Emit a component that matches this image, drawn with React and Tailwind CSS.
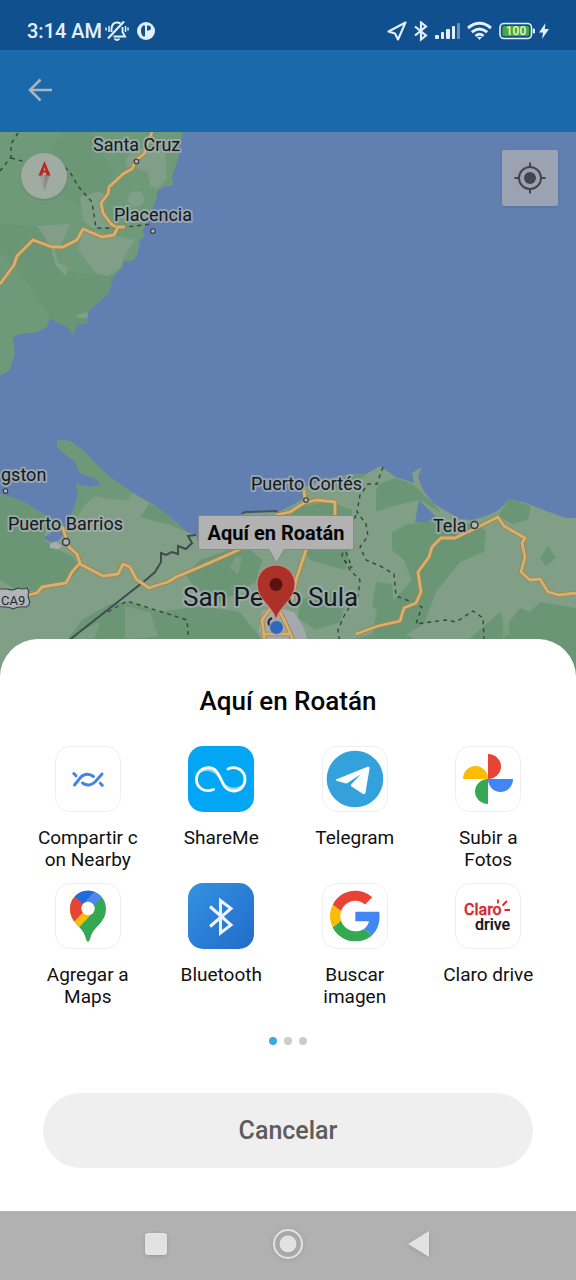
const dark = "#6a9676";
const mid = "#6f9a79";
const light = "#809f86";

function MapArt() {
  return (
    <svg
      className="absolute inset-0 h-full w-full"
      viewBox="0 132 576 563"
      preserveAspectRatio="xMidYMin slice"
      fontFamily="Roboto, sans-serif"
      role="img"
      aria-label="Mapa"
    >
      <rect x="0" y="132" width="576" height="563" fill="#617fb1" />

      {/* northern coast */}
      <path
        fill={mid}
        d="M0 132H183L180 143L178 160L174 171L172 177L173 186L166 186L158 190L156 200L150 214L143 230L144 237L140 240L137 255L133 261L124 261L122 268L114 276L109 292L100 301L88 312L87 323L77 325L74 335L67 327L58 323L50 318L47 327L37 332L20 334L13 338L15 353L10 370L0 376Z"
      />
      <path fill={dark} d="M0 223L35 226L50 236L58 268L80 274L114 276L109 292L100 301L88 312L87 323L77 325L74 334L67 327L58 322L50 318L20 272L0 252Z" />
      <path fill={dark} d="M98 146L112 170L112 190L96 193L80 207L62 195L50 160L60 132H92Z" opacity=".6" />
      <g fill={light}>
        <path d="M83 228L115 236L135 240L128 250L124 258L120 268L108 276L96 273L87 262L78 250Z" />
        <path d="M37 226L70 224L62 243L54 248L58 262L68 268L66 276L56 266L50 246Z" />
        <path d="M80 197L100 191L107 198L102 208L112 227L94 229L84 222Z" />
        <path d="M126 160L134 148L165 150L167 178L158 189L150 186L148 172L135 168L126 166Z" />
        <circle cx="136" cy="199" r="8" />
        <path d="M76 315L88 312L87 318L78 318Z" />
      </g>

      {/* southern coast */}
      <path
        fill={light}
        d="M0 494L20 500L37 510L55 521L62 531L52 532L43 538L50 542L58 541L64 534L68 522L74 508L78 495L76 484L90 487L100 485L98 480L80 473L75 462L63 452L57 447L57 440L70 441L85 452L97 465L110 477L133 493L157 507L177 523L187 532L196 535L200 548L215 546L234 535L242 514L280 511L293 505L304 498L301 488L327 479L347 475L366 474L380 466L396 477L414 483L412 473L422 467L418 477L423 490L433 503L446 511L460 519L472 520L486 516L499 510L509 499L526 503L549 512L566 518L576 518V695H0Z"
      />
      <path fill="#617fb1" d="M419 500L415 522L424 523L437 518L427 508Z" />
      <g fill={dark}>
        <path d="M0 494L20 500L37 510L55 521L46 530L44 540L58 550L72 556L80 568L66 584L40 590L20 592L0 580Z" />
        <path d="M57 440L70 441L85 452L97 465L110 477L133 493L127 500L110 499L95 496L84 506L76 520L70 522L78 495L76 484L90 487L100 485L98 480L80 473L75 462L63 452L57 447Z" opacity=".8" />
        <path d="M149 504L157 507L177 523L187 532L170 525L140 517Z" />
        <path d="M82 620L110 604L130 602L160 612L200 606L240 612L262 640L270 695H30L60 650Z" />
        <path d="M200 560L245 545L262 560L256 582L220 602L196 590L186 575Z" />
        <path d="M290 508L330 502L352 510L350 548L345 570L310 560L296 536Z" />
        <path d="M300 600L330 590L346 600L340 622L316 630L298 618Z" />
        <path d="M327 479L366 474L350 488L338 490Z" />
        <path d="M379 484L396 478L414 485L424 495L433 503L440 512L420 500L392 506L376 512L376 490Z" />
        <path d="M408 524L440 520L470 524L486 530L484 552L460 562L436 592L424 624L404 636L372 640L376 612L394 600L412 580L404 560L392 550L392 532Z" />
        <path d="M509 499L531 506L528 520L512 524L498 516Z" />
        <path d="M540 558L548 546L556 558L546 566Z" />
        <path d="M376 582L392 584L394 606L380 612L372 606Z" />
        <path d="M468 640L484 626L500 612L506 626L520 608L530 612L540 602L576 608V695H440Z" />
        <path d="M352 640L380 632L410 636L420 650H350Z" />
      </g>
      <g fill={light} opacity=".8">
        <path d="M125 606L150 612L158 636L125 640Z" />
        <path d="M80 632L100 622L94 640H76Z" />
        <path d="M236 556L242 558L238 574L230 568Z" />
        <path d="M503 622L508 614L510 634L503 638Z" />
      </g>
      <path fill="#a8acb0" d="M50 544L56 542L62 546L58 549L50 548Z" />
      <path fill="#a3a9ac" d="M262 612L272 606L294 612L304 628L310 650H266L259 630Z" />

      {/* boundaries */}
      <g fill="none" stroke="#32493c" strokeWidth="1.4" strokeDasharray="4 4">
        <path d="M18 133L11 144L11 157L0 171" />
        <path d="M11 158L26 162L60 163L70 172L78 186L92 202L96 228L118 228L152 224" />
        <path d="M108 612L127 601L187 620L189 645" />
        <path d="M383 467L377 484L368 484L360 495L357 512L366 524L368 536L360 547L366 560L380 566L394 574L396 596L412 602L422 607L416 624L446 620L456 622L473 611L483 618L484 640" />
        <path d="M356 515L346 540L342 556L350 570L360 580L358 596L350 606L344 616L338 630L340 645" />
        <path d="M346 552L352 568L344 560" />
      </g>
      <path
        d="M68 641L147 579L155 572L161 562V553L166 555L172 552L178 554V546L186 549L192 543L188 536L196 535"
        fill="none"
        stroke="#3f4b50"
        strokeWidth="2"
      />
      <path d="M242 514Q244 511 250 512L276 511L281 515" fill="none" stroke="#475460" strokeWidth="2" />

      {/* roads */}
      <g fill="none" strokeLinejoin="round">
        {["#a8823f", "#d3b174"].map((c, i) => (
          <g key={c} stroke={c} strokeWidth={i ? 2.8 : 4.4}>
            <path d="M152 132L144 154L136 160L132 169L123 174L109 187L108 194L101 203L103 213L111 224L116 227" />
            <path d="M0 284L14 265L17 256L33 240L52 247L63 247L77 240L83 229L102 237L114 235L118 227L125 227" />
            <path d="M28 595L37 593L42 587L66 583L72 572L80 563L77 554L69 547L62 526" />
            <path d="M80 564L103 576L118 574L123 564L130 567L136 579L149 588L161 584L168 582L176 577L200 567L225 556L245 547" />
            <path d="M276 515L290 512L304 503L316 500L335 502V516L306 550L296 580L292 600" />
            <path d="M356 634L378 626L400 621L404 608L416 603L421 592L418 572L429 557L432 547L441 538L455 538L472 530L484 524L498 517L504 526L525 538L522 543L525 557L521 572L530 580L540 579L548 592L559 595L576 593" />
            <path d="M304 490L305 499" />
            <path d="M272 606L262 620L265 645M280 612L286 624L294 642M264 634H290" />
          </g>
        ))}
      </g>

      {/* towns */}
      <g fill="#aeb5b8" stroke="#343a3d" strokeWidth="1.5">
        <circle cx="136.500" cy="161.500" r="2.300" strokeWidth="1.100" />
        <circle cx="153" cy="231" r="2.300" strokeWidth="1.100" />
        <circle cx="5.500" cy="491" r="2.300" strokeWidth="1.100" />
        <circle cx="306" cy="500" r="2.300" strokeWidth="1.100" />
        <circle cx="66" cy="542" r="3.500" />
        <circle cx="474.500" cy="525" r="3.500" />
      </g>
      <g fill="#b2b5b8" stroke="#3c4548" strokeWidth="1.200">
        <path d="M-4 589H7Q13 591 18 588Q23 590 27 588L29 592Q27 596 29.500 601Q30 606 26 607Q18 606 13 609Q8 606 -4 607Z" />
      </g>
      <text x="1" y="605" fontSize="13" fill="#22282a">CA9</text>

      <g
        fill="#15191b"
        stroke="#a5afb4"
        strokeOpacity=".75"
        strokeWidth="4"
        strokeLinejoin="round"
        style={{ paintOrder: "stroke" }}
        fontSize="18"
      >
        <text x="93" y="151">Santa Cruz</text>
        <text x="114" y="221">Placencia</text>
        <text x="1" y="481">gston</text>
        <text x="8" y="530">Puerto Barrios</text>
        <text x="251" y="490">Puerto Cortés</text>
        <text x="433" y="532">Tela</text>
        <text x="183" y="606" fontSize="26">San Pedro Sula</text>
      </g>

      {/* marker and its callout */}
      <path d="M272 618Q266 621 270 626" fill="none" stroke="#1d2122" strokeWidth="2" />
      <path
        d="M276 620C273 606 257 600 257 584A19 19 0 0 1 295 584C295 600 279 606 276 620Z"
        fill="#ab3129"
        stroke="#c99489"
        strokeWidth="1"
      />
      <circle cx="276" cy="584.500" r="6.500" fill="#5c110f" />
      <circle cx="276.500" cy="627.500" r="7" fill="#2f68bd" stroke="#a5adb6" strokeWidth="1" />
      <path d="M198.500 515.500H353.500V549.500H284L276.500 563L269 549.500H198.500Z" fill="#b2b2b2" stroke="#858b8b" strokeWidth="1" />
      <text x="276" y="540" fontSize="20" fontWeight="700" textAnchor="middle" fill="#050505">
        Aquí en Roatán
      </text>
    </svg>
  );
}

function StatusBar() {
  return (
    <div className="flex h-[50px] items-center bg-[#11508f] px-[27px] pt-3 text-[#e3f0fb]">
      <span className="text-[20px] leading-6 font-medium">3:14 AM</span>
      <svg className="ml-[3px] h-[22px] w-6" viewBox="0 0 24 22" fill="none" stroke="currentColor" strokeWidth="1.900">
        <path d="M6.500 12V9Q7 2.500 12 2.500Q14 2.500 15.500 3.500M17.500 7V12L20 16.500H8.500" />
        <path d="M3 18.500L19 1.500" strokeWidth="2.200" />
        <path d="M9.500 18.500Q12 21.500 14.500 18.500" />
        <path d="M4 6V12M1 7.500V10.500M20.500 6V12M23 7.500V10.500" strokeWidth="1.500" />
      </svg>
      <svg className="ml-2 h-[18px] w-[18px]" viewBox="0 0 18 18">
        <circle cx="9" cy="9" r="9" fill="currentColor" />
        <path d="M8 3.500H6Q4 5 4 9T6 14.500H8Z" fill="#11508f" />
        <path d="M10 3.500H11.500Q14 3.800 14 6Q14 8.300 11.500 8.500H10Z" fill="#11508f" />
      </svg>
      <div className="ml-auto flex items-center gap-[7px]">
        <svg className="h-5 w-5" viewBox="0 0 20 20" fill="none" stroke="currentColor" strokeWidth="2.100" strokeLinejoin="round">
          <path d="M18.500 1.500L1.500 10.500L8 12.500L11 18.500Z" />
        </svg>
        <svg className="h-[21px] w-3.5" viewBox="0 0 14 21" fill="none" stroke="currentColor" strokeWidth="2.200">
          <path d="M1 5.500L12 14.500L7 18.500V1.500L12 5.500L1 14.500" />
        </svg>
        <svg className="h-5 w-[25px]" viewBox="0 0 25 20" fill="currentColor">
          <rect x="0" y="14" width="4" height="4" rx="1" />
          <rect x="6" y="11" width="3" height="7" rx="1" />
          <rect x="11" y="8" width="4" height="10" rx="1" />
          <rect x="17" y="5" width="3" height="13" rx="1" />
          <rect x="22" y="2" width="3" height="16" rx="1" opacity=".4" />
        </svg>
        <svg className="h-5 w-[25px]" viewBox="0 0 25 20" fill="none" stroke="currentColor" strokeWidth="2.900">
          <path d="M1 7Q12.500 -2.300 24 7" />
          <path d="M4.800 11.200Q12.500 4.600 20.200 11.200" />
          <path d="M8.500 15Q12.500 11.500 16.500 15" />
          <path d="M10 16H15L12.500 19Z" fill="currentColor" stroke="none" />
        </svg>
        <div className="flex items-center gap-1">
          <svg className="h-[18px] w-9" viewBox="0 0 36 18">
            <rect x="1" y="1.500" width="31.500" height="15" rx="4" fill="none" stroke="currentColor" strokeWidth="1.600" />
            <rect x="3.500" y="4" width="26.500" height="10" rx="1.500" fill="#4aa82d" />
            <rect x="33.800" y="6.500" width="2.200" height="5" rx="1" fill="currentColor" />
            <text x="17" y="13" fontSize="12" fontWeight="500" textAnchor="middle" fill="#e9f6e4" fontFamily="Roboto, sans-serif">100</text>
          </svg>
          <svg className="h-4 w-2.5" viewBox="0 0 10 16" fill="currentColor">
            <path d="M6.500 0L0 9.500H4L3 16L10 6H5.800Z" />
          </svg>
        </div>
      </div>
    </div>
  );
}

const tileBase = "flex h-[66px] w-[66px] items-center justify-center overflow-hidden rounded-[15px]";

const apps = [
  {
    lines: ["Compartir c", "on Nearby"],
    tile: "border border-[#efefef] bg-white",
    art: (
      <g fill="none" stroke="#4782e6" strokeWidth="3" strokeLinecap="round">
        <path d="M19.500 39L25.500 31.500Q28.500 28.300 32 28.300Q36 28.300 38.500 30.500" />
        <path d="M27.500 37Q30.500 39.300 34 39Q37.500 38.600 40.500 35.500L47 28" />
        <path d="M18.800 27.500L21 29.800M45.200 37.200L47.300 39.300" />
      </g>
    ),
  },
  {
    lines: ["ShareMe"],
    tile: "bg-[#03a5f5]",
    art: (
      <>
        <path d="M9 30Q12 20.500 21 21.500Q28 22 33 36Q28 25.500 20 25Q13 24.500 9 30ZM57 36Q54 46 45 45Q37 44 33 33Q38 41.500 46 41.500Q53 41 57 36Z" fill="#8dd6fb" />
        <path
          d="M25.500 43.500C16 47 8.500 41.500 8.500 33.500C8.500 26.500 14 21.700 20.500 21.700C35 21.700 31 45 45.500 45C52 45 57 40 57 33.300C57 25 49 19 40 23"
          fill="none"
          stroke="#fff"
          strokeWidth="2.800"
          strokeLinecap="round"
        />
      </>
    ),
  },
  {
    lines: ["Telegram"],
    tile: "border border-[#efefef] bg-white",
    art: (
      <>
        <circle cx="33" cy="33" r="28.300" fill="#33a1dc" />
        <path d="M14.500 33.200L45.500 20.800Q48 20.200 47.600 22.600L43.500 46.500Q43 49 40.700 47.700L29.500 40.500Q28.200 39.500 29.300 38.300L38.700 28.200L25.500 37Q24.300 37.700 23 37.300L14.500 34.700Q12.800 34 14.500 33.200Z" fill="#fff" />
      </>
    ),
  },
  {
    lines: ["Subir a", "Fotos"],
    tile: "border border-[#efefef] bg-white",
    art: (
      <>
        <path d="M33 33V8A13 12.500 0 0 1 33 33Z" fill="#e94335" />
        <path d="M33 33H8A12.500 13 0 0 1 33 33Z" fill="#fbbc05" />
        <path d="M33 33H58A12.500 13 0 0 1 33 33Z" fill="#4285f4" />
        <path d="M33 33V58A13 12.500 0 0 1 33 33Z" fill="#34a853" />
      </>
    ),
  },
  {
    lines: ["Agregar a", "Maps"],
    tile: "border border-[#efefef] bg-white",
    art: (
      <>
        <clipPath id="pin">
          <path d="M33 58.700C31 58.700 31 54 28.500 49.500C24.500 42.500 15 38 15 25.700A18 18 0 0 1 51 25.700C51 38 41.500 42.500 37.500 49.500C35 54 35 58.700 33 58.700Z" />
        </clipPath>
        <g clipPath="url(#pin)">
          <rect width="66" height="66" fill="#34a853" />
          <path d="M33 25.500L38.500 29L22.500 46L0 60V20Z" fill="#fbbc04" />
          <path d="M14 8L33 25.500L28 29.500L16.500 41H0Z" fill="#e94335" />
          <path d="M19.500 13.500L14 0H60L47 13.500L38 24L33 25.700Z" fill="#4c88f0" />
          <path d="M19.500 13.500L14 0H48L39.500 8.500L28 21Z" fill="#1f6be0" />
        </g>
        <circle cx="33" cy="25.500" r="6.700" fill="#fff" />
      </>
    ),
  },
  {
    lines: ["Bluetooth"],
    tile: "bg-linear-to-br from-[#3492e2] to-[#226bc8]",
    art: (
      <path d="M22 23.500L43 42L32.500 50V17.500L43 25.500L22 43.500" fill="none" stroke="#eef5ff" strokeWidth="3" />
    ),
  },
  {
    lines: ["Buscar", "imagen"],
    tile: "border border-[#efefef] bg-white",
    art: (
      <g transform="translate(8 7.700) scale(1.055)">
        <path fill="#4285f4" d="M46.980 24.550c0-1.570-.15-3.090-.38-4.550H24v9.020h12.940c-.58 2.960-2.260 5.480-4.780 7.180l7.730 6c4.510-4.180 7.090-10.360 7.090-17.650z" />
        <path fill="#e94335" d="M24 9.500c3.540 0 6.710 1.220 9.210 3.600l6.850-6.850C35.900 2.380 30.470 0 24 0 14.620 0 6.510 5.380 2.560 13.220l7.980 6.190C12.430 13.720 17.740 9.500 24 9.500z" />
        <path fill="#fbbc05" d="M10.530 28.590c-.48-1.450-.76-2.990-.76-4.590s.27-3.140.76-4.590l-7.980-6.190C.92 16.460 0 20.120 0 24c0 3.880.92 7.540 2.560 10.780l7.970-6.190z" />
        <path fill="#34a853" d="M24 48c6.480 0 11.930-2.130 15.890-5.810l-7.730-6c-2.150 1.450-4.920 2.300-8.160 2.300-6.260 0-11.570-4.220-13.470-9.910l-7.980 6.190C6.510 42.620 14.620 48 24 48z" />
      </g>
    ),
  },
  {
    lines: ["Claro drive"],
    tile: "border border-[#efefef] bg-white",
    art: (
      <>
        <g fontFamily="Roboto, sans-serif" fontSize="16" fontWeight="500">
          <text x="9" y="32" fill="#d9262c" stroke="#d9262c" strokeWidth=".3">Claro</text>
          <text x="20" y="47" fill="#161616" stroke="#161616" strokeWidth=".2">drive</text>
        </g>
        <path d="M43 16.500V20.500M47.500 22.500L52 18M49.500 27H55" stroke="#d9262c" strokeWidth="1.800" />
      </>
    ),
  },
];

function AppTile({ app }) {
  return (
    <button type="button" className="flex flex-col items-center gap-[15px]">
      <span className={`${tileBase} ${app.tile}`}>
        <svg className="h-[66px] w-[66px] shrink-0" viewBox="0 0 66 66" aria-hidden="true">
          {app.art}
        </svg>
      </span>
      <span className="min-h-[44px] text-[19px] leading-[22px] text-[#111]">
        {app.lines.map((line) => (
          <span key={line} className="block whitespace-nowrap">{line}</span>
        ))}
      </span>
    </button>
  );
}

function ShareSheet() {
  return (
    <section className="relative -mt-14 flex flex-col rounded-t-[38px] bg-white px-[21px] pt-[46px] pb-[43px]">
      <h1 className="text-center text-[26px] leading-8 font-medium text-[#050505]">Aquí en Roatán</h1>
      <div className="mt-[29px] grid grid-cols-4 gap-y-3">
        {apps.map((app) => (
          <AppTile key={app.lines[0]} app={app} />
        ))}
      </div>
      <div className="mt-[29px] flex justify-center gap-[7px]">
        <span className="h-2 w-2 rounded-full bg-[#3ba9e4]" />
        <span className="h-2 w-2 rounded-full bg-[#cccccc]" />
        <span className="h-2 w-2 rounded-full bg-[#cccccc]" />
      </div>
      <button type="button" className="mx-[22px] mt-12 h-[75px] rounded-full bg-[#efefef] text-[25px] font-medium text-[#5d5d5d]">
        Cancelar
      </button>
    </section>
  );
}

export default function App() {
  return (
    <div className="flex min-h-screen flex-col bg-[#b1b1b1] font-[Roboto,sans-serif]">
      <StatusBar />
      <header className="flex h-[82px] items-center bg-[#1a69aa] px-7 pb-0.5">
        <button type="button" aria-label="Atrás" className="text-[#adb4ba]">
          <svg className="h-6 w-6" viewBox="0 0 24 24" fill="none" stroke="currentColor" strokeWidth="2.500">
            <path d="M24 12H2M12.500 1.500L2 12L12.500 22.500" />
          </svg>
        </button>
      </header>
      <main className="relative min-h-[400px] flex-1 overflow-hidden">
        <MapArt />
        <button type="button" aria-label="Brújula" className="absolute top-[21px] left-[21px] h-[46px] w-[46px] rounded-full bg-[#a0aba1] shadow">
          <svg className="h-full w-full" viewBox="0 0 46 46">
            <path d="M18.500 22H28.500L23.300 38Z" fill="#9a9d9c" />
            <path d="M23.300 22H28.500L23.300 38Z" fill="#87898a" />
            <path d="M23.500 8L29.500 22.500H25.500L25 19.500H22L21.300 22.500H17.500Z" fill="#bd2522" />
            <path d="M23.500 14L24.500 17.500H22.500Z" fill="#c99a90" />
          </svg>
        </button>
        <button type="button" aria-label="Mi ubicación" className="absolute top-[18px] right-[18px] h-14 w-14 rounded-[2px] bg-[#9ba3b2] shadow">
          <svg className="h-full w-full" viewBox="0 0 56 56" fill="none" stroke="#41464c" strokeWidth="2">
            <circle cx="28" cy="28" r="11" />
            <circle cx="28" cy="28" r="6" fill="#41464c" stroke="none" />
            <path d="M28 12.500V17M28 39V43.500M12.500 28H17M39 28H43.500" />
          </svg>
        </button>
      </main>
      <ShareSheet />
      <nav className="grid h-[69px] grid-cols-3 items-center bg-[#b1b1b1] px-[90px] pb-1 text-[#e2e2e2]">
        <button type="button" aria-label="Recientes" className="flex justify-center">
          <svg className="h-8 w-8 drop-shadow-sm" viewBox="0 0 32 32" fill="currentColor">
            <rect x="5" y="5" width="22" height="22" rx="3" />
          </svg>
        </button>
        <button type="button" aria-label="Inicio" className="flex justify-center">
          <svg className="h-8 w-8 drop-shadow-sm" viewBox="0 0 32 32">
            <circle cx="16" cy="16" r="14" fill="none" stroke="currentColor" strokeWidth="2" />
            <circle cx="16" cy="16" r="8.500" fill="currentColor" />
          </svg>
        </button>
        <button type="button" aria-label="Volver" className="flex justify-center">
          <svg className="h-8 w-8 drop-shadow-sm" viewBox="0 0 32 32" fill="currentColor">
            <path d="M25 3V29L4 16Z" />
          </svg>
        </button>
      </nav>
    </div>
  );
}
